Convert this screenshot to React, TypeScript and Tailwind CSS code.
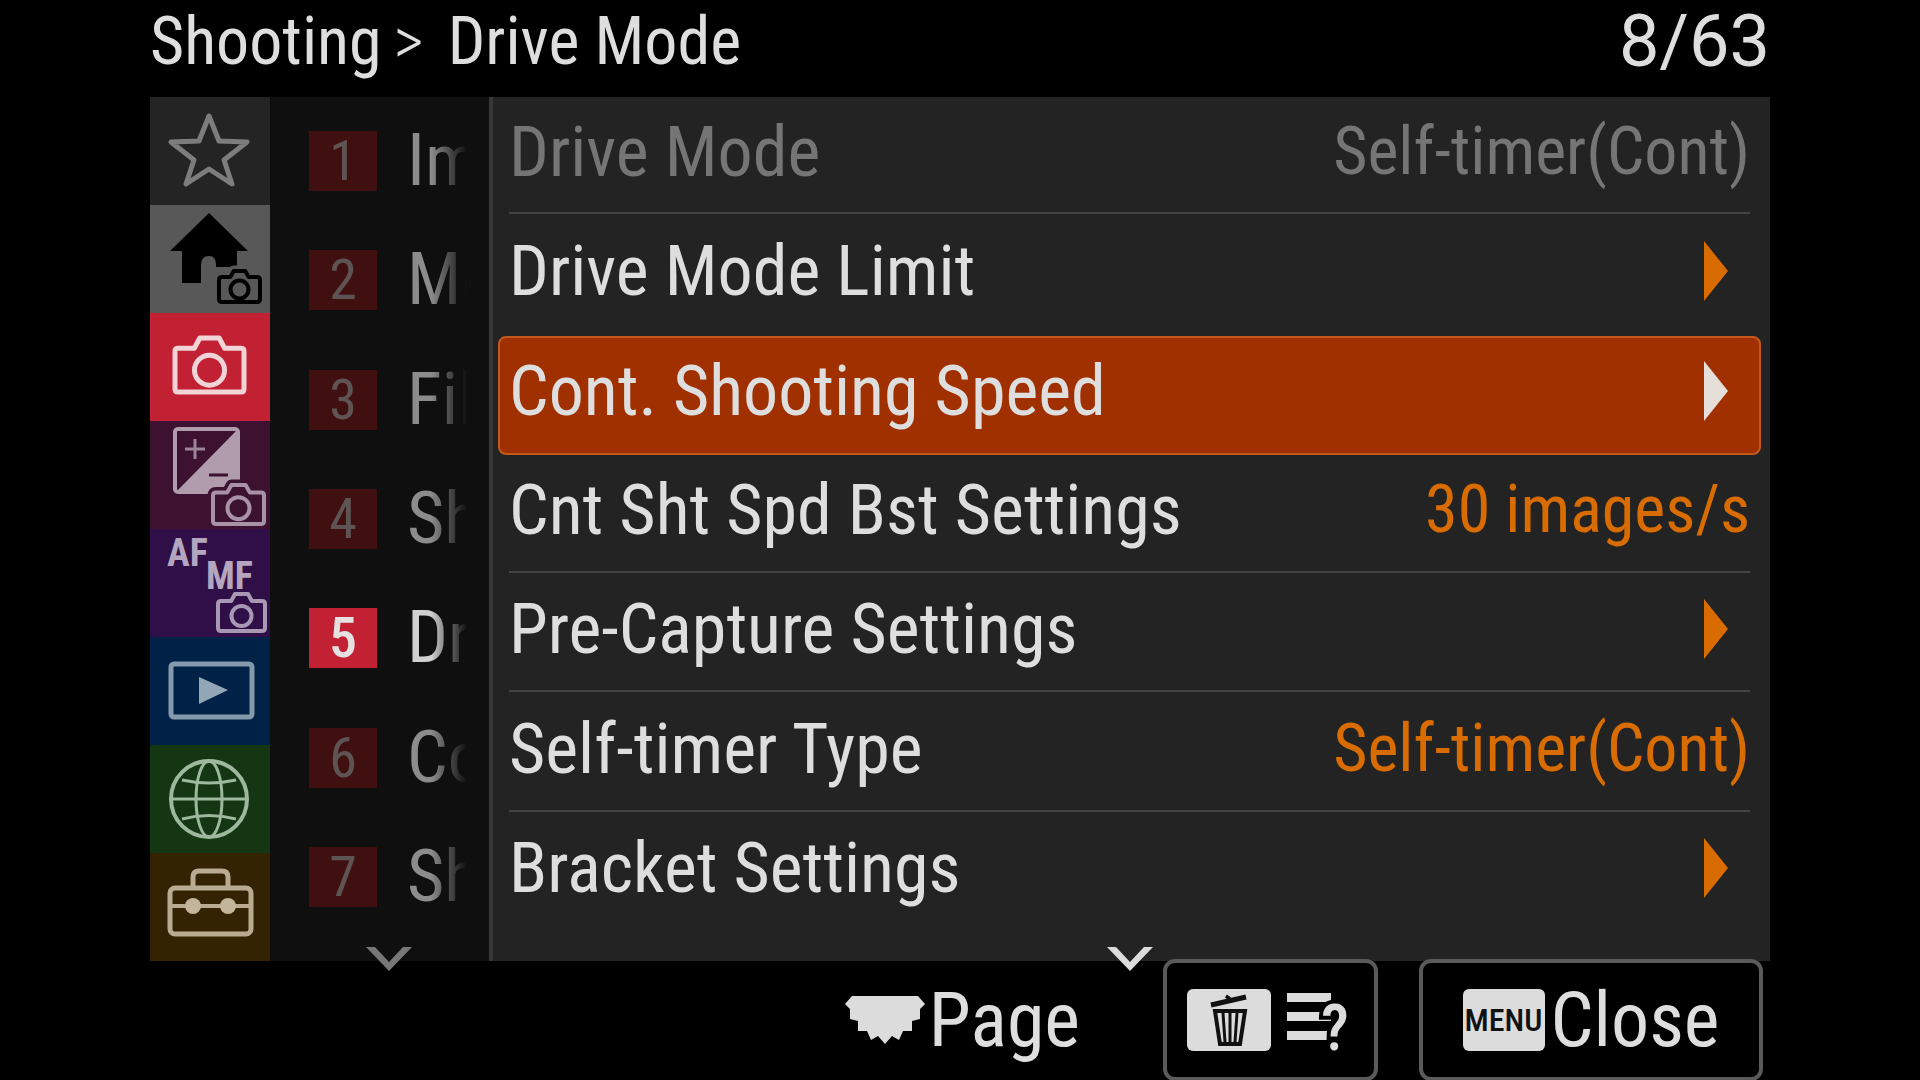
import type { ReactNode } from "react";

type CameraProps = { x: number; y: number; w: number; h: number; r: number; stroke: string; width: number; halo?: string };

function Camera({ x, y, w, h, r, stroke, width, halo }: CameraProps) {
  const s = h * 0.19;
  const c = x + w / 2;
  const body = `M${x + 3} ${y + s}H${c - w * 0.22}L${c - w * 0.14} ${y}H${c + w * 0.14}L${c + w * 0.22} ${y + s}H${x + w - 3}Q${x + w} ${y + s} ${x + w} ${y + s + 3}V${y + h - 3}Q${x + w} ${y + h} ${x + w - 3} ${y + h}H${x + 3}Q${x} ${y + h} ${x} ${y + h - 3}V${y + s + 3}Q${x} ${y + s} ${x + 3} ${y + s}Z`;
  return (
    <g strokeLinejoin="round">
      {halo && <path d={body} fill={halo} stroke={halo} strokeWidth={width + 7} />}
      <path d={body} fill="none" stroke={stroke} strokeWidth={width} />
      <circle cx={c} cy={y + s + (h - s) / 2} r={r} fill="none" stroke={stroke} strokeWidth={width} />
    </g>
  );
}

function TabButton({ label, tone, children }: { label: string; tone: string; children: ReactNode }) {
  return (
    <button type="button" aria-label={label} className={`flex min-h-0 w-full flex-1 items-center justify-center ${tone}`}>
      <svg viewBox="0 0 120 108" className="h-[108px] w-[120px]" fill="none" aria-hidden="true">
        {children}
      </svg>
    </button>
  );
}

function Tabs() {
  return (
    <nav aria-label="Menu tabs" className="flex w-[120px] shrink-0 flex-col">
      <TabButton label="My Menu" tone="bg-[#242424]">
        <path
          d="M59 19L69 44L97 45L74 63L82 87L59 72L36 87L44 63L21 45L49 44Z"
          stroke="#7d7d7d"
          strokeWidth="5"
          strokeLinejoin="round"
        />
      </TabButton>
      <TabButton label="Main" tone="bg-[#585858]">
        <path d="M59 8L98 46H87V62H66V60Q66 51 59 51Q51 51 51 60V78H32V46H20Z" fill="#000" />
        <Camera x={69} y={66} w={41} h={31} r={9} stroke="#000" width={4} halo="#585858" />
      </TabButton>
      <TabButton label="Shooting" tone="bg-[#c22033]">
        <Camera x={25} y={25} w={69} h={54} r={15} stroke="#f2d3d6" width={5} />
      </TabButton>
      <TabButton label="Exposure/Color" tone="bg-[#3d1230]">
        <path d="M88 8V71H26Z" fill="#b19cae" />
        <rect x="25" y="8" width="63" height="63" rx="3" stroke="#b19cae" strokeWidth="4" />
        <path d="M35 28H55M45 18V38" stroke="#9c8499" strokeWidth="3" />
        <path d="M59 54H78" stroke="#3d1230" strokeWidth="3" />
        <Camera x={63} y={64} w={51} h={39} r={11} stroke="#a892a5" width={4} halo="#3d1230" />
      </TabButton>
      <TabButton label="Focus" tone="bg-[#300f48]">
        <g fill="#b5a6bf" fontFamily="'Roboto Condensed', Roboto, sans-serif" fontWeight="700" fontSize="38">
          <text x="17" y="37">AF</text>
          <text x="56" y="60">MF</text>
        </g>
        <Camera x={68} y={65} w={47} h={37} r={10} stroke="#a898b3" width={4} />
      </TabButton>
      <TabButton label="Playback" tone="bg-[#002246]">
        <rect x="21" y="27" width="81" height="53" rx="3" stroke="#8599ad" strokeWidth="5" />
        <path d="M49 40L78 53L49 67Z" fill="#93a6b8" />
      </TabButton>
      <TabButton label="Network" tone="bg-[#153612]">
        <g stroke="#9db89d" strokeWidth="3">
          <circle cx="59" cy="54" r="38" strokeWidth="4" />
          <ellipse cx="59" cy="54" rx="13" ry="38" />
          <path d="M21 54H97M32 35Q59 41 86 35M32 74Q59 67 86 74" />
        </g>
      </TabButton>
      <TabButton label="Setup" tone="bg-[#332303]">
        <g stroke="#b8ab91" strokeWidth="5">
          <rect x="20" y="35" width="81" height="46" rx="5" />
          <path d="M43 35V24Q43 18 49 18H72Q78 18 78 24V35" />
          <path d="M20 53H101" strokeWidth="4" />
        </g>
        <circle cx="43" cy="53" r="8" fill="#c2b59c" />
        <circle cx="78" cy="53" r="8" fill="#c2b59c" />
      </TabButton>
    </nav>
  );
}

function Chevron({ color }: { color: string }) {
  return (
    <svg viewBox="0 0 46 24" className="h-6 w-[46px]" fill="none" aria-hidden="true">
      <path d="M0 0H9L23 15L37 0H46L23 24Z" fill={color} />
    </svg>
  );
}

const groups = ["Im", "Me", "Fil", "Sh", "Dr", "Co", "Sh"];
const activeGroup = 4;

function Groups() {
  return (
    <nav aria-label="Groups" className="relative flex w-[219px] shrink-0 flex-col bg-[#0f0f0f] pb-7">
      {groups.map((name, i) => {
        const on = i === activeGroup;
        return (
          <button key={i} type="button" className="flex min-h-0 flex-1 items-center gap-[30px] pl-[39px] pt-2">
            <span
              className={`flex h-[60px] w-[68px] shrink-0 items-center justify-center text-[56px] leading-none ${
                on ? "bg-[#c22033] font-medium text-[#e6e0e0]" : "bg-[#401011] text-[#5f5454]"
              }`}
            >
              {i + 1}
            </span>
            <span
              className={`w-[72px] text-left text-[72px] leading-[84px] [mask-image:linear-gradient(to_right,black_24px,transparent_60px)] ${
                on ? "text-[#d0d0d0]" : "text-[#8c8c8c]"
              }`}
            >
              {name}
            </span>
          </button>
        );
      })}
      <div className="absolute inset-x-0 -bottom-2.5 flex justify-center pl-[18px]">
        <Chevron color="#777777" />
      </div>
    </nav>
  );
}

type Item = { label: string; value?: string; disabled?: boolean; selected?: boolean; line?: boolean };

const items: Item[] = [
  { label: "Drive Mode", value: "Self-timer(Cont)", disabled: true, line: true },
  { label: "Drive Mode Limit" },
  { label: "Cont. Shooting Speed", selected: true },
  { label: "Cnt Sht Spd Bst Settings", value: "30 images/s", line: true },
  { label: "Pre-Capture Settings", line: true },
  { label: "Self-timer Type", value: "Self-timer(Cont)", line: true },
  { label: "Bracket Settings" },
];

function Row({ item }: { item: Item }) {
  const { label, value, disabled, selected, line } = item;
  return (
    <button
      type="button"
      disabled={disabled}
      className={`flex min-h-0 flex-1 rounded-lg border-2 px-[9px] text-left ${
        selected ? "border-[#c4581c] bg-[#a03000]" : "border-transparent"
      } ${disabled ? "text-[#757575]" : "text-[#dedede]"}`}
    >
      <span
        className={`flex flex-1 items-center justify-between border-b-2 pb-2 ${line ? "border-[#444444]" : "border-transparent"}`}
      >
        <span className="whitespace-nowrap text-[70px] leading-[84px]">{label}</span>
        {value ? (
          <span className={`whitespace-nowrap text-[66px] leading-[84px] ${disabled ? "" : "text-[#d96c00]"}`}>{value}</span>
        ) : (
          <svg viewBox="0 0 24 60" className="mr-[22px] h-[60px] w-6" aria-hidden="true">
            <path d="M0 0L24 30L0 60Z" fill={selected ? "#e6ded8" : "#d96c00"} />
          </svg>
        )}
      </span>
    </button>
  );
}

function DialIcon() {
  return (
    <svg viewBox="0 0 80 48" className="h-12 w-20" aria-hidden="true">
      <path
        d="M7 0H73L80 8L75 13V23L67 25V35L58 35L54 44L47 40L40 48L33 40L26 44L22 35L13 35V25L5 23V13L0 8Z"
        fill="#dcdcdc"
      />
    </svg>
  );
}

function TrashIcon() {
  return (
    <svg viewBox="0 0 84 62" className="h-[62px] w-[84px] rounded-md bg-[#dcdcdc]" fill="none" aria-hidden="true">
      <path d="M24 16L59 8" stroke="#111" strokeWidth="5" />
      <path d="M40 10L42 7" stroke="#111" strokeWidth="5" />
      <path d="M28 22H58L53 55H33Z" stroke="#111" strokeWidth="4" />
      <path d="M36 24L38 53M43 24V53M50 24L48 53" stroke="#111" strokeWidth="3" />
    </svg>
  );
}

function HelpListIcon() {
  return (
    <svg viewBox="0 0 64 62" className="h-[62px] w-16" aria-hidden="true">
      <path d="M0 4H44V13H0ZM0 23H44V32H0ZM0 42H44V51H0Z" fill="#dcdcdc" />
      <text
        x="34"
        y="61"
        fontFamily="'Roboto Condensed', Roboto, sans-serif"
        fontWeight="500"
        fontSize="64"
        fill="#dcdcdc"
        stroke="#000"
        strokeWidth="8"
        paintOrder="stroke"
      >
        ?
      </text>
    </svg>
  );
}

export default function App() {
  return (
    <div className="flex min-h-screen flex-col bg-black px-[150px] font-['Roboto_Condensed',Roboto,sans-serif] text-[#dedede]">
      <header className="flex h-[97px] shrink-0 items-center justify-between pb-3.5">
        <h1 className="flex items-center text-[66px] leading-[80px]">
          <span>Shooting</span>
          <span className="ml-3 mr-6 font-light">&gt;</span>
          <span>Drive Mode</span>
        </h1>
        <p className="font-['Roboto',sans-serif] text-[72px] leading-[80px]">8/63</p>
      </header>

      <main className="flex flex-1">
        <Tabs />
        <Groups />
        <section
          aria-label="Drive Mode"
          className="relative flex min-w-0 flex-1 flex-col border-l-4 border-[#383838] bg-[#232323] pb-7 pl-[5px] pr-[9px]"
        >
          {items.map((item) => (
            <Row key={item.label} item={item} />
          ))}
          <div className="absolute inset-x-0 -bottom-2.5 flex justify-center pr-1">
            <Chevron color="#dcdcdc" />
          </div>
        </section>
      </main>

      <footer className="relative -mt-0.5 flex h-[122px] shrink-0 items-stretch justify-end pr-[7px]">
        <div className="mr-[83px] flex items-center gap-1">
          <DialIcon />
          <span className="text-[76px] leading-[84px]">Page</span>
        </div>
        <button
          type="button"
          aria-label="Help"
          className="mr-[41px] flex w-[215px] items-center justify-center gap-4 rounded-xl border-4 border-[#5a5a5a] bg-black pr-1"
        >
          <TrashIcon />
          <HelpListIcon />
        </button>
        <button
          type="button"
          className="flex w-[344px] items-center justify-center gap-1.5 rounded-xl border-4 border-[#5a5a5a] bg-black"
        >
          <span className="flex h-[62px] w-[82px] items-center justify-center rounded-md bg-[#dcdcdc] text-[32px] font-medium leading-none text-[#111111]">
            MENU
          </span>
          <span className="text-[76px] leading-[84px]">Close</span>
        </button>
      </footer>
    </div>
  );
}
